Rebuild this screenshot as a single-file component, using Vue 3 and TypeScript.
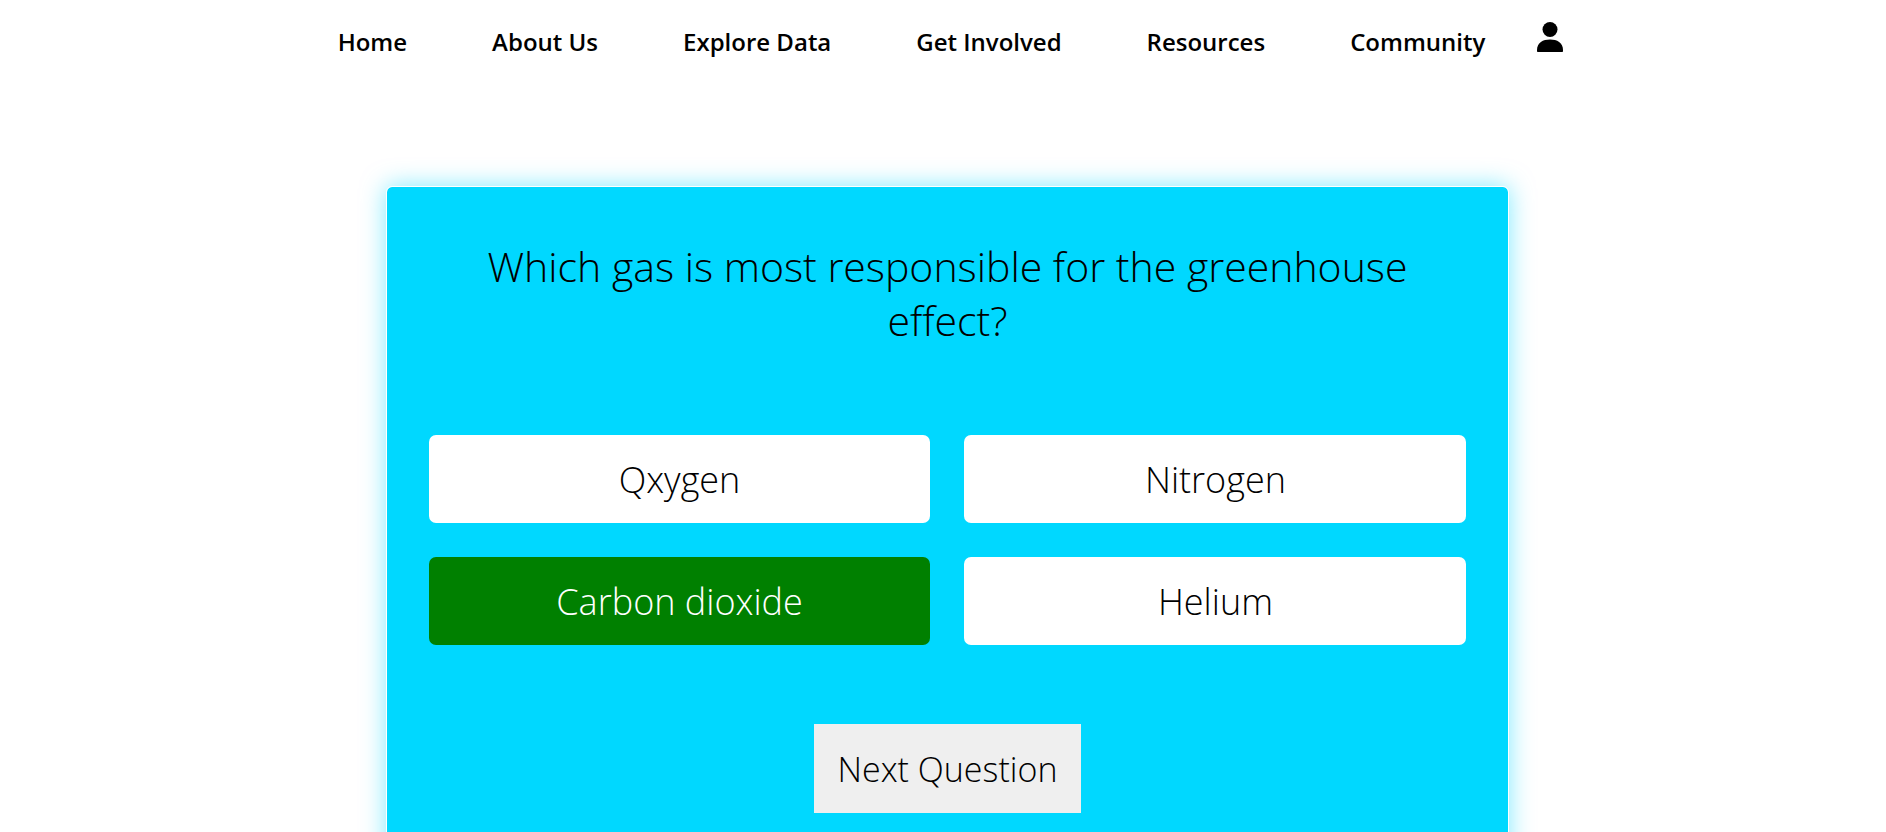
<script setup lang="ts">
import { ref } from 'vue'

interface Question {
  text: string
  answers: string[]
  correct: number
}

const links: string[] = ['Home', 'About Us', 'Explore Data', 'Get Involved', 'Resources', 'Community']

const question: Question = {
  text: 'Which gas is most responsible for the greenhouse effect?',
  answers: ['Qxygen', 'Nitrogen', 'Carbon dioxide', 'Helium'],
  correct: 2,
}

const selected = ref<number | null>(2)

function choose(index: number): void {
  if (selected.value === null) selected.value = index
}

function next(): void {
  selected.value = null
}

function stateOf(index: number) {
  return {
    correct: selected.value !== null && index === question.correct,
    wrong: selected.value === index && index !== question.correct,
  }
}
</script>

<template>
  <div class="page">
    <header class="header">
      <nav>
        <ul class="links">
          <li v-for="link in links" :key="link"><a href="#">{{ link }}</a></li>
        </ul>
      </nav>
      <a class="account" href="#" aria-label="Account">
        <svg viewBox="0 0 26 30" width="26" height="30" aria-hidden="true">
          <circle cx="13" cy="7.5" r="7.5" />
          <path d="M13 17.5C20 17.5 26 20.500 26 28V29.200Q26 30 25.200 30H.8Q0 30 0 29.200V28C0 20.500 6 17.500 13 17.500z" />
        </svg>
      </a>
    </header>

    <main class="quiz">
      <h1 class="question">{{ question.text }}</h1>
      <div class="answers">
        <button
          v-for="(answer, index) in question.answers"
          :key="answer"
          type="button"
          class="answer"
          :class="stateOf(index)"
          @click="choose(index)"
        >
          {{ answer }}
        </button>
      </div>
      <button type="button" class="next" @click="next">Next Question</button>
    </main>
  </div>
</template>

<style>
html,
body {
  background: #fff;
  scrollbar-width: none;
}
</style>

<style scoped>
.page {
  padding: 0 2px 0 11px;
  font-family: 'Open Sans', 'Noto Sans', sans-serif;
  color: #000;
}

.header {
  display: flex;
  justify-content: center;
  align-items: flex-start;
  gap: 52px;
  padding: 22px 0 0 6px;
}

.links {
  display: flex;
  gap: 85px;
  margin: 0;
  padding: 3px 0 0;
  list-style: none;
}

.links a {
  display: block;
  color: inherit;
  font-size: 24px;
  font-weight: 600;
  line-height: 33px;
  text-decoration: none;
  white-space: nowrap;
}

.account {
  display: block;
  color: inherit;
}

.account svg {
  display: block;
  fill: currentColor;
}

.quiz {
  box-sizing: border-box;
  display: flex;
  flex-direction: column;
  align-items: center;
  width: 60%;
  margin: 128px auto 0;
  padding: 52px 42px;
  border: 1px solid #fff;
  border-radius: 6px;
  background: #00d8ff;
  background-clip: padding-box;
  box-shadow: 0 0 24px rgba(0, 216, 255, 0.5);
}

.question {
  margin: 0;
  font-size: 41px;
  font-weight: 300;
  line-height: 54px;
  text-align: center;
}

.answers {
  display: grid;
  grid-template-columns: 1fr 1fr;
  gap: 34px;
  width: 100%;
  margin: 88px 0 79px;
}

.answer {
  height: 88px;
  padding: 0 20px;
  border: none;
  border-radius: 7px;
  background: #fff;
  color: #000;
  font: 300 36px 'Open Sans', 'Noto Sans', sans-serif;
  cursor: pointer;
}

.answer.correct {
  background: #008000;
  color: #fff;
}

.answer.wrong {
  background: #c00000;
  color: #fff;
}

.next {
  height: 89px;
  padding: 0 24px;
  border: none;
  background: #efefef;
  color: #000;
  font: 300 34px 'Open Sans', 'Noto Sans', sans-serif;
  cursor: pointer;
}
</style>
